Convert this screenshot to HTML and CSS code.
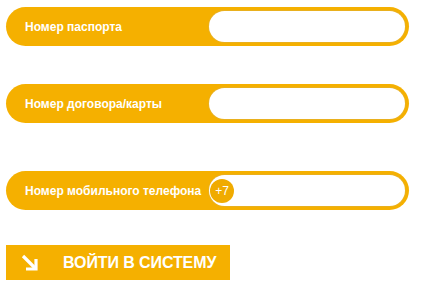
FILE: index.html
```html
<!DOCTYPE html>
<html lang="ru">

<head>
    <meta charset="UTF-8" />
    <meta name="viewport" content="width=device-width, initial-scale=1.0" />
    <link rel="stylesheet" href="styles.css">
    <title>Вход</title>
</head>

<body>
    <form class="login-form">
        <div class="field field-passport">
            <label class="field-label" for="passport">Номер паспорта</label>
            <div class="field-input"><input type="text" id="passport"></div>
        </div>
        <div class="field field-contract">
            <label class="field-label" for="contract">Номер договора/карты</label>
            <div class="field-input"><input type="text" id="contract"></div>
        </div>
        <div class="field field-phone">
            <label class="field-label" for="phone">Номер мобильного телефона</label>
            <div class="field-input">
                <span class="phone-code">+7</span>
                <input type="text" id="phone">
            </div>
        </div>
        <button type="submit" class="btn-login">
            <svg class="btn-icon" width="18" height="18" viewBox="0 0 18 18">
                <path d="M2 2 L14 14" stroke="#fff" stroke-width="3.2" fill="none" />
                <path d="M15 5 V15 H5" stroke="#fff" stroke-width="3.2" fill="none" />
            </svg>
            <span>ВОЙТИ В СИСТЕМУ</span>
        </button>
    </form>
</body>

</html>
```

FILE: styles.css
```css
* {
    margin: 0;
    padding: 0;
    box-sizing: border-box;
}

body {
    background-color: #fff;
    font-family: "Liberation Sans", Arial, sans-serif;
}

.login-form {
    display: flex;
    flex-direction: column;
    align-items: flex-start;
    padding: 7px 0 0 6px;
}

.field {
    display: flex;
    align-items: center;
    width: 403px;
    height: 39px;
    padding: 4px;
    background-color: #f5b000;
    border-radius: 20px;
}

.field-contract {
    margin-top: 38px;
}

.field-phone {
    margin-top: 48px;
}

.field-label {
    flex: none;
    width: 199px;
    padding-left: 15px;
    color: #fff;
    font-size: 12px;
    font-weight: bold;
    white-space: nowrap;
}

.field-input {
    flex: 1;
    min-width: 0;
    display: flex;
    align-items: center;
    height: 31px;
    background-color: #fff;
    border-radius: 16px;
    box-shadow: 0 0 0 1px #e9b01e;
}

.field-input input {
    flex: 1;
    min-width: 0;
    height: 100%;
    border: none;
    outline: none;
    background: transparent;
    padding: 0 12px;
    font-size: 12px;
}

.phone-code {
    flex: none;
    display: flex;
    align-items: center;
    justify-content: center;
    width: 24px;
    height: 24px;
    margin-left: 1px;
    border-radius: 50%;
    background-color: #f0ab00;
    color: #fff;
    font-size: 12px;
}

.btn-login {
    display: flex;
    align-items: center;
    width: 224px;
    height: 35px;
    margin-top: 35px;
    padding-left: 15px;
    border: none;
    background-color: #f5b000;
    color: #fff;
    font-family: "Liberation Sans", Arial, sans-serif;
    font-size: 16px;
    font-weight: bold;
    letter-spacing: -0.1px;
    cursor: pointer;
}

.btn-icon {
    margin-right: 24px;
}
```
